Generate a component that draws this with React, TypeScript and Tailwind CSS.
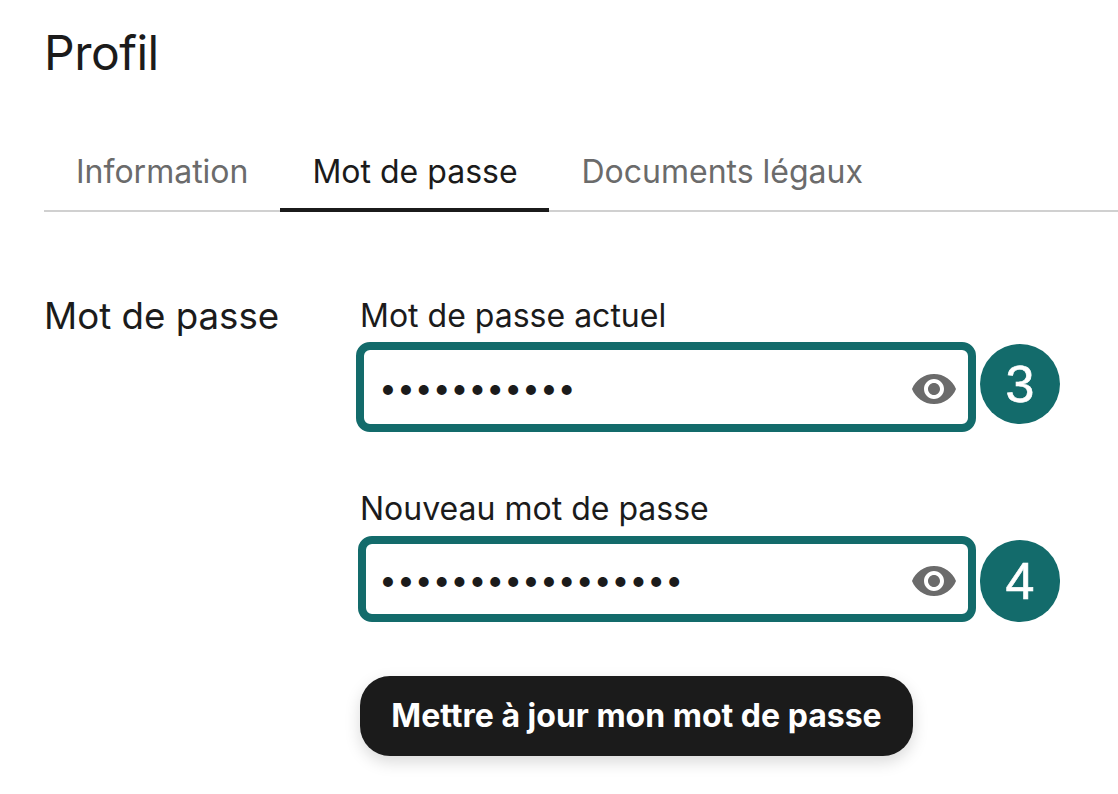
const EYE = 'M12 4.5C7 4.5 2.73 7.61 1 12c1.73 4.39 6 7.5 11 7.5s9.27-3.11 11-7.5c-1.73-4.39-6-7.5-11-7.5zM12 17c-2.76 0-5-2.24-5-5s2.24-5 5-5 5 2.24 5 5-2.24 5-5 5zm0-8c-1.66 0-3 1.34-3 3s1.34 3 3 3 3-1.34 3-3-1.34-3-3-3z'

function PasswordField({ label, value, badge, labelClass, boxClass, inputClass, badgeClass }: { label: string; value: string; badge: string; labelClass: string; boxClass: string; inputClass: string; badgeClass: string }) {
  return (
    <div>
      <label className={`block pl-[4px] text-[32px] leading-[36px] text-[#1b1b1b] ${labelClass}`}>{label}</label>
      <div className={`relative flex items-center rounded-[14px] border-[8px] border-[#136b6b] bg-white ${boxClass}`}>
        <input
          type="password"
          readOnly
          value={value}
          className={`min-w-0 flex-1 bg-transparent pt-[2px] text-[31.8px] text-[#1b1b1b] outline-none ${inputClass}`}
        />
        <svg width="48" height="48" viewBox="0 0 24 24" fill="#6b6b6b" className="mr-[10px] mt-[3px] shrink-0">
          <path d={EYE} />
        </svg>
        <span className={`absolute right-[-92px] flex h-[80px] w-[80px] items-center justify-center rounded-full bg-[#136b6b] font-['Liberation_Sans',sans-serif] text-[52px] text-white [-webkit-text-stroke:0.6px_white] ${badgeClass}`}>
          {badge}
        </span>
      </div>
    </div>
  )
}

export default function App() {
  return (
    <div className="h-[794px] w-[1118px] overflow-hidden bg-white pl-[44px] font-['Inter',sans-serif] text-[#1b1b1b]">
      <h1 className="pt-[24px] text-[48px] leading-[58px] tracking-[-0.5px]">Profil</h1>

      <div className="mt-[60px] flex h-[70px] border-b-2 border-[#d0d0d0]">
        <div className="px-[32px] pt-[10px] text-[32px] leading-[40px] text-[#6b6b6b]">Information</div>
        <div className="mb-[-2px] w-[269px] border-b-4 border-[#1b1b1b] px-[32px] pt-[10px] text-[32px] leading-[40px] whitespace-nowrap">Mot de passe</div>
        <div className="px-[32px] pt-[10px] text-[32px] leading-[40px] text-[#6b6b6b]">Documents légaux</div>
      </div>

      <div className="mt-[83px] flex">
        <div className="w-[312px] shrink-0 text-[36.7px] leading-[42px]">Mot de passe</div>
        <div className="flex w-[620px] flex-col pt-[3px]">
          <PasswordField label="Mot de passe actuel" value="aaaaaaaaaaa" badge="3" labelClass="mb-[8px]" boxClass="h-[90px]" inputClass="pl-[15px]" badgeClass="top-[-6px]" />
          <div className="mt-[59px]">
            <PasswordField label="Nouveau mot de passe" value="aaaaaaaaaaaaaaaaa" badge="4" labelClass="mb-[9px]" boxClass="ml-[2px] h-[86px]" inputClass="pl-[13px]" badgeClass="top-[-4px] h-[82px]" />
          </div>
          <button className="ml-[4px] mt-[54px] h-[80px] w-[553px] rounded-[30px] bg-[#1b1b1b] text-[32px] font-bold text-white shadow-[0_6px_16px_rgba(0,0,0,0.15)]">
            Mettre à jour mon mot de passe
          </button>
        </div>
      </div>
    </div>
  )
}
